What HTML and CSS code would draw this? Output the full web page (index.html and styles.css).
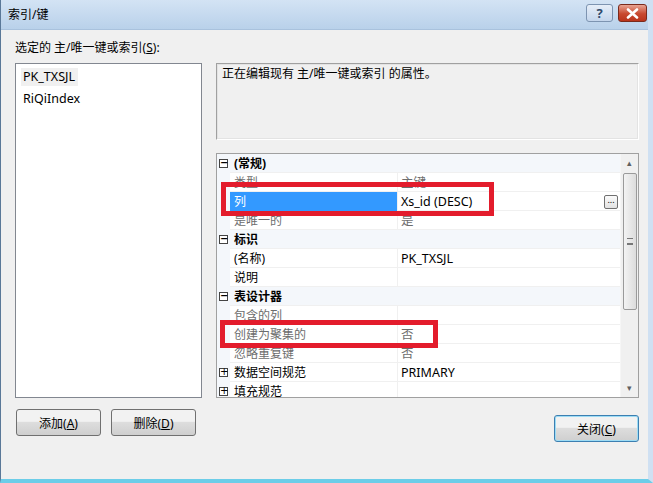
FILE: index.html
```html
<!DOCTYPE html>
<html lang="zh-CN">
<head>
    <meta charset="UTF-8">
    <title>索引/键</title>
    <link rel="stylesheet" href="styles.css">
</head>
<body>

<div class="window">
    <div class="titlebar">
        <span class="title">索引/键</span>
        <div class="caption-buttons">
            <span class="cap-btn help">?</span>
            <span class="cap-btn close">
                <svg width="13" height="11" viewBox="0 0 13 11"><path d="M2 1.5 L11 9.5 M11 1.5 L2 9.5" stroke="#fff" stroke-width="2.6" stroke-linecap="round"/></svg>
            </span>
        </div>
    </div>

    <div class="content">
        <div class="label">选定的 主/唯一键或索引(<u>S</u>):</div>

        <div class="panes">
            <div class="listbox">
                <div class="list-item selected">PK_TXSJL</div>
                <div class="list-item">RiQiIndex</div>
            </div>

            <div class="right">
                <div class="desc">正在编辑现有 主/唯一键或索引 的属性。</div>

                <div class="grid">
                    <div class="rows">
                        <div class="row cat"><span class="gutter"><i class="box">−</i></span><span class="name">(常规)</span></div>
                        <div class="row dim"><span class="gutter"></span><span class="name">类型</span><span class="value">主键</span></div>
                        <div class="row"><span class="gutter"></span><span class="name sel">列</span><span class="value">Xs_id (DESC)<span class="dots">...</span></span></div>
                        <div class="row dim"><span class="gutter"></span><span class="name">是唯一的</span><span class="value">是</span></div>
                        <div class="row cat"><span class="gutter"><i class="box">−</i></span><span class="name">标识</span></div>
                        <div class="row"><span class="gutter"></span><span class="name">(名称)</span><span class="value">PK_TXSJL</span></div>
                        <div class="row"><span class="gutter"></span><span class="name">说明</span><span class="value"></span></div>
                        <div class="row cat"><span class="gutter"><i class="box">−</i></span><span class="name">表设计器</span></div>
                        <div class="row dim"><span class="gutter"></span><span class="name">包含的列</span><span class="value"></span></div>
                        <div class="row dim"><span class="gutter"></span><span class="name">创建为聚集的</span><span class="value">否</span></div>
                        <div class="row dim"><span class="gutter"></span><span class="name">忽略重复键</span><span class="value">否</span></div>
                        <div class="row"><span class="gutter"><i class="box">+</i></span><span class="name">数据空间规范</span><span class="value">PRIMARY</span></div>
                        <div class="row"><span class="gutter"><i class="box">+</i></span><span class="name">填充规范</span><span class="value"></span></div>
                    </div>
                    <div class="scrollbar">
                        <span class="arrow">▴</span>
                        <div class="track">
                            <div class="thumb"><span class="grip"></span></div>
                        </div>
                        <span class="arrow">▾</span>
                    </div>

                    <div class="mark mark-col"></div>
                    <div class="mark mark-cluster"></div>
                </div>
            </div>
        </div>

        <div class="buttons">
            <div class="left-buttons">
                <button class="btn">添加(<u>A</u>)</button>
                <button class="btn">删除(<u>D</u>)</button>
            </div>
            <button class="btn default">关闭(<u>C</u>)</button>
        </div>
    </div>
</div>

</body>
</html>
```

FILE: styles.css
```css
body {
    margin: 0;
    padding: 0;
    font-family: "Noto Sans", "Noto Sans CJK SC", sans-serif;
    font-size: 12px;
    color: #000;
    background-color: #fff;
}
.window {
    width: 653px;
    height: 483px;
    box-sizing: border-box;
    display: flex;
    flex-direction: column;
    background-color: #f0f0f0;
    border-left: 1px solid #5a7898;
    border-right: 5px solid #cfe0f2;
    border-bottom: 4px solid #6ccde8;
    position: relative;
}
.titlebar {
    height: 30px;
    flex-shrink: 0;
    background: linear-gradient(#d3e3f4, #b9d1ea);
    border-bottom: 1px solid #a9c2dd;
    box-sizing: border-box;
    display: flex;
    align-items: center;
    justify-content: space-between;
    padding: 0 0 2px 7px;
}
.title {
    font-size: 12px;
    color: #000;
}
.caption-buttons {
    display: flex;
    gap: 5px;
    align-self: flex-start;
    margin-top: 4px;
    margin-right: 1px;
}
.cap-btn {
    width: 27px;
    height: 18px;
    box-sizing: border-box;
    border: 1px solid #7d94b1;
    border-radius: 3px;
    display: flex;
    align-items: center;
    justify-content: center;
}
.help {
    background: linear-gradient(#e6eef8, #c4d6ec);
    color: #2f4a6b;
    font-weight: bold;
    font-size: 13px;
}
.close {
    width: 29px;
    background: linear-gradient(#e8a493, #c8492f 55%, #b9341b);
    border-color: #7a2a1c;
}
.content {
    padding: 11px 9px 0 14px;
    flex: 1;
}
.label {
    height: 14px;
    line-height: 14px;
    margin-bottom: 8px;
}
.panes {
    display: flex;
    gap: 14px;
    height: 335px;
}
.listbox {
    width: 187px;
    box-sizing: border-box;
    background-color: #fff;
    border: 1px solid #828790;
    padding: 4px 0 0 5px;
}
.list-item {
    width: fit-content;
    height: 18px;
    line-height: 18px;
    padding: 0 3px 0 2px;
    margin-bottom: 4px;
    font-size: 12.5px;
}
.list-item.selected {
    background-color: #f0f0f0;
}
.right {
    width: 423px;
    display: flex;
    flex-direction: column;
}
.desc {
    height: 77px;
    box-sizing: border-box;
    border: 1px solid #a0a0a0;
    border-right-color: #fff;
    border-bottom-color: #fff;
    box-shadow: inset 0 0 0 1px #e3e3e3;
    padding: 2px 5px;
    line-height: 16px;
    margin-bottom: 13px;
}
.grid {
    height: 245px;
    box-sizing: border-box;
    border: 1px solid #a0a0a0;
    background-color: #fff;
    display: flex;
    position: relative;
    overflow: hidden;
}
.rows {
    flex: 1;
}
.row {
    display: flex;
    height: 19px;
    line-height: 20px;
    box-shadow: inset 0 -1px 0 #f0f0f0;
}
.gutter {
    width: 13px;
    flex-shrink: 0;
    display: flex;
    align-items: center;
    justify-content: center;
    background-color: #f4f7fb;
}
.box {
    width: 9px;
    height: 9px;
    box-sizing: border-box;
    border: 1px solid #444;
    font-style: normal;
    font-size: 10px;
    line-height: 6px;
    text-align: center;
    font-family: "DejaVu Sans", sans-serif;
    background-color: #fff;
}
.name {
    width: 163px;
    flex-shrink: 0;
    padding-left: 4px;
    border-right: 1px solid #f0f0f0;
}
.name.sel {
    background-color: #3399ff;
    color: #fff;
}
.value {
    flex: 1;
    padding-left: 3px;
    display: flex;
    justify-content: space-between;
    align-items: center;
    font-size: 12.5px;
}
.cat {
    background-color: #f4f7fb;
    font-weight: bold;
}
.cat .name {
    border-right: none;
}
.dim .name,
.dim .value {
    color: #6d6d6d;
}
.dots {
    width: 14px;
    height: 14px;
    box-sizing: border-box;
    border: 1px solid #707070;
    border-radius: 2px;
    background: linear-gradient(#fbfbfb, #e2e2e2);
    font-size: 9px;
    line-height: 8px;
    text-align: center;
    margin-right: 2px;
    color: #000;
}
.scrollbar {
    width: 17px;
    display: flex;
    flex-direction: column;
    background-color: #f0f0f0;
    border-left: 1px solid #f6f6f6;
}
.arrow {
    height: 18px;
    font-size: 9px;
    line-height: 18px;
    text-align: center;
    color: #606060;
}
.track {
    flex: 1;
}
.thumb {
    margin: 1px 1px 0 2px;
    height: 135px;
    border: 1px solid #9a9a9a;
    border-radius: 2px;
    background: linear-gradient(to right, #f3f3f3, #dcdcdc);
    display: flex;
    align-items: center;
    justify-content: center;
}
.grip {
    width: 6px;
    height: 5px;
    border-top: 1px solid #777;
    border-bottom: 1px solid #777;
    box-shadow: inset 0 -2px 0 -1px #777;
}
.mark {
    position: absolute;
    border: 5px solid #e31c2c;
    box-sizing: border-box;
}
.mark-col {
    left: 4px;
    top: 28px;
    width: 273px;
    height: 34px;
}
.mark-cluster {
    left: 3px;
    top: 166px;
    width: 218px;
    height: 28px;
}
.buttons {
    display: flex;
    justify-content: space-between;
    margin-top: 11px;
}
.left-buttons {
    display: flex;
    gap: 10px;
    margin-left: 1px;
}
.btn {
    width: 85px;
    height: 27px;
    font-family: "Noto Sans", "Noto Sans CJK SC", sans-serif;
    font-size: 12px;
    border: 1px solid #707070;
    border-radius: 3px;
    background: linear-gradient(#f2f2f2 45%, #dddddd 50%, #cfcfcf);
    padding: 0;
    cursor: pointer;
}
.btn.default {
    margin-top: 6px;
    border-color: #3c7fb1;
    box-shadow: inset 0 0 0 1px #9ddcf5;
}
```
